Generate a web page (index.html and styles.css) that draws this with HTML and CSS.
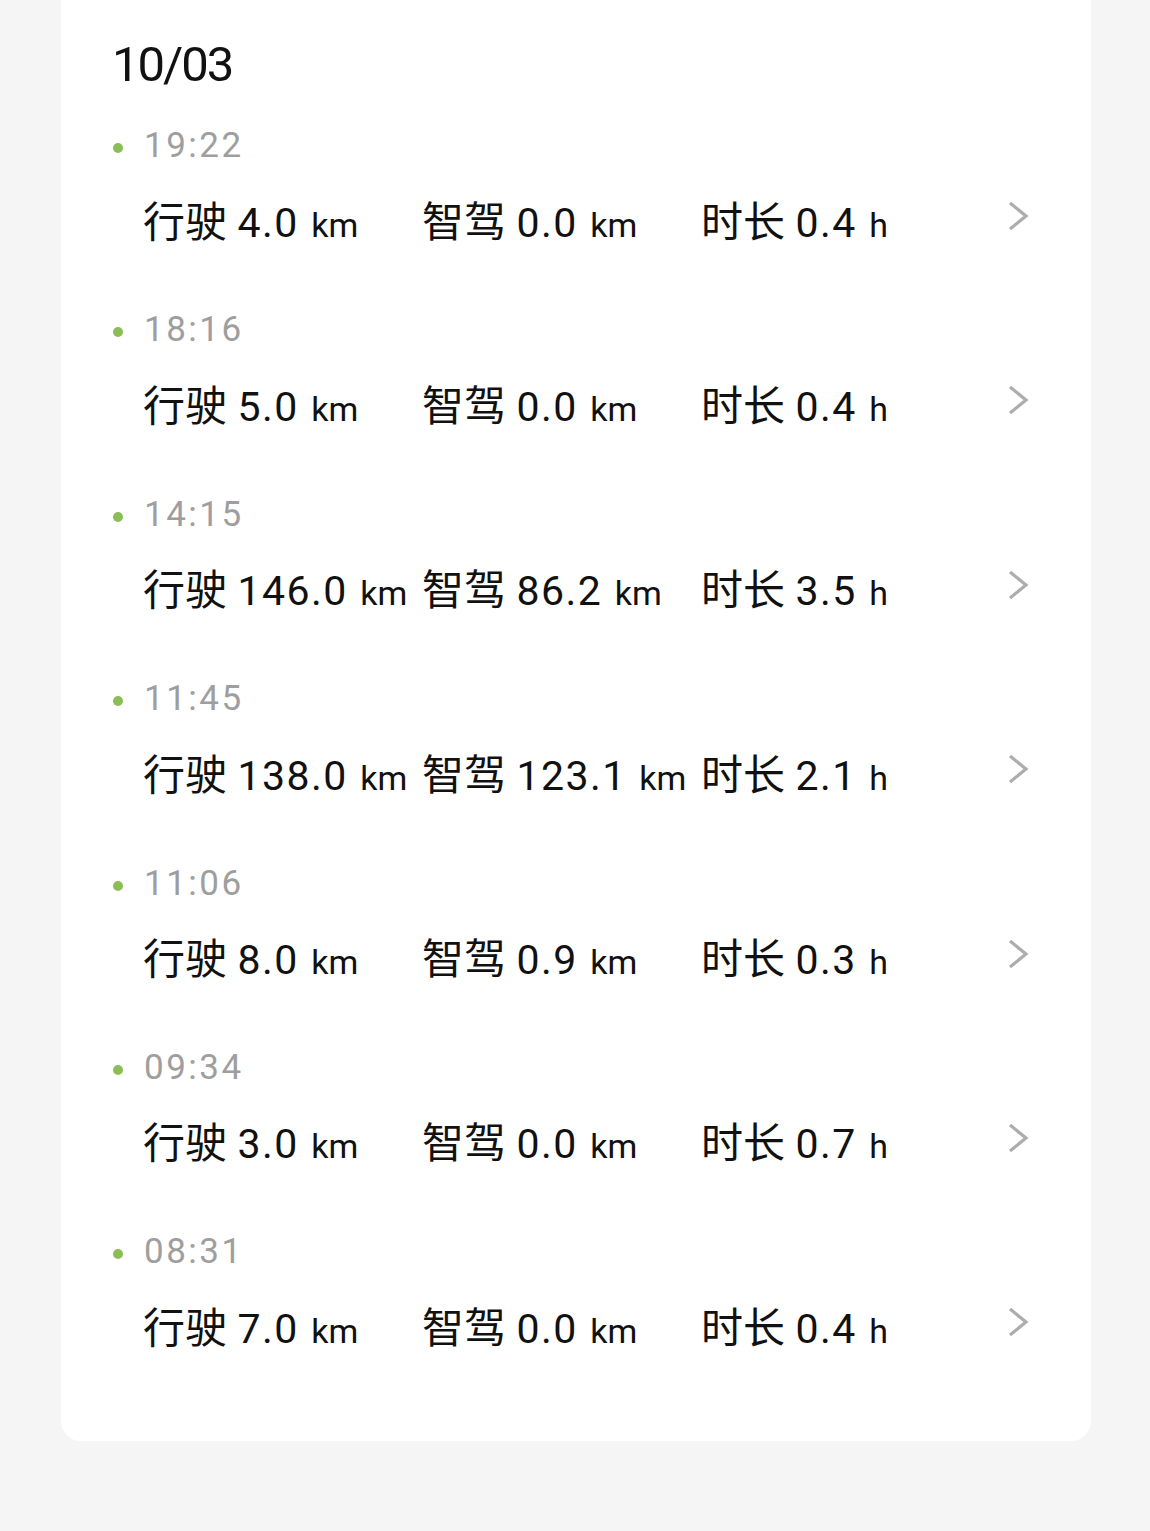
FILE: index.html
```html
<!DOCTYPE html>
<html lang="zh-CN">
<head>
    <meta charset="UTF-8">
    <meta name="viewport" content="width=device-width, initial-scale=1.0">
    <title>行程记录</title>
    <link rel="stylesheet" href="styles.css">
</head>
<body>
    <div class="card">
        <div class="date">10/03</div>

        <div class="trip">
            <div class="trip-time"><span class="dot"></span>19:22</div>
            <div class="trip-row">
                <div class="stat">行驶 <b>4.0</b> <small>km</small></div>
                <div class="stat">智驾 <b>0.0</b> <small>km</small></div>
                <div class="stat">时长 <b>0.4</b> <small>h</small></div>
                <svg class="chevron" viewBox="0 0 22 32"><polyline points="3,3 19,16 3,29"/></svg>
            </div>
        </div>

        <div class="trip">
            <div class="trip-time"><span class="dot"></span>18:16</div>
            <div class="trip-row">
                <div class="stat">行驶 <b>5.0</b> <small>km</small></div>
                <div class="stat">智驾 <b>0.0</b> <small>km</small></div>
                <div class="stat">时长 <b>0.4</b> <small>h</small></div>
                <svg class="chevron" viewBox="0 0 22 32"><polyline points="3,3 19,16 3,29"/></svg>
            </div>
        </div>

        <div class="trip">
            <div class="trip-time"><span class="dot"></span>14:15</div>
            <div class="trip-row">
                <div class="stat">行驶 <b>146.0</b> <small>km</small></div>
                <div class="stat">智驾 <b>86.2</b> <small>km</small></div>
                <div class="stat">时长 <b>3.5</b> <small>h</small></div>
                <svg class="chevron" viewBox="0 0 22 32"><polyline points="3,3 19,16 3,29"/></svg>
            </div>
        </div>

        <div class="trip">
            <div class="trip-time"><span class="dot"></span>11:45</div>
            <div class="trip-row">
                <div class="stat">行驶 <b>138.0</b> <small>km</small></div>
                <div class="stat">智驾 <b>123.1</b> <small>km</small></div>
                <div class="stat">时长 <b>2.1</b> <small>h</small></div>
                <svg class="chevron" viewBox="0 0 22 32"><polyline points="3,3 19,16 3,29"/></svg>
            </div>
        </div>

        <div class="trip">
            <div class="trip-time"><span class="dot"></span>11:06</div>
            <div class="trip-row">
                <div class="stat">行驶 <b>8.0</b> <small>km</small></div>
                <div class="stat">智驾 <b>0.9</b> <small>km</small></div>
                <div class="stat">时长 <b>0.3</b> <small>h</small></div>
                <svg class="chevron" viewBox="0 0 22 32"><polyline points="3,3 19,16 3,29"/></svg>
            </div>
        </div>

        <div class="trip">
            <div class="trip-time"><span class="dot"></span>09:34</div>
            <div class="trip-row">
                <div class="stat">行驶 <b>3.0</b> <small>km</small></div>
                <div class="stat">智驾 <b>0.0</b> <small>km</small></div>
                <div class="stat">时长 <b>0.7</b> <small>h</small></div>
                <svg class="chevron" viewBox="0 0 22 32"><polyline points="3,3 19,16 3,29"/></svg>
            </div>
        </div>

        <div class="trip">
            <div class="trip-time"><span class="dot"></span>08:31</div>
            <div class="trip-row">
                <div class="stat">行驶 <b>7.0</b> <small>km</small></div>
                <div class="stat">智驾 <b>0.0</b> <small>km</small></div>
                <div class="stat">时长 <b>0.4</b> <small>h</small></div>
                <svg class="chevron" viewBox="0 0 22 32"><polyline points="3,3 19,16 3,29"/></svg>
            </div>
        </div>
    </div>
</body>
</html>
```

FILE: styles.css
```css
body {
    margin: 0;
    background-color: #f5f5f5;
    font-family: Roboto, "Noto Sans CJK SC", sans-serif;
    color: #111;
}

.card {
    margin: 0 59px 0 61px;
    padding: 0 62px 45px 51px;
    background-color: #fff;
    border-radius: 0 0 20px 20px;
}

/* Date heading */
.date {
    padding-top: 25px;
    font-size: 49px;
    line-height: 80px;
    letter-spacing: -2px;
}

/* One trip: time line + stats line */
.trip {
    height: 184.4px;
    padding-top: 16px;
    box-sizing: border-box;
}
.trip-time {
    display: flex;
    align-items: center;
    font-size: 35px;
    line-height: 50px;
    letter-spacing: 2.5px;
    color: #9e9e9e;
}
.dot {
    width: 10px;
    height: 10px;
    border-radius: 50%;
    background-color: #8bbf55;
    margin: 4px 21px 0 1px;
}

.trip-row {
    display: flex;
    align-items: center;
    margin-top: 17px;
    padding-left: 31px;
    height: 60px;
}
.stat {
    min-width: 267px;
    margin-right: 12px;
    font-size: 42px;
    white-space: nowrap;
}
.stat:nth-child(3) {
    min-width: 0;
}
.stat b {
    font-weight: normal;
    font-size: 41px;
    letter-spacing: 1.5px;
}
.stat small {
    font-size: 34px;
    margin-left: 2px;
}

.chevron {
    width: 22px;
    height: 32px;
    margin-left: auto;
    margin-top: -4px;
    fill: none;
    stroke: #adadad;
    stroke-width: 3.2;
}
```
